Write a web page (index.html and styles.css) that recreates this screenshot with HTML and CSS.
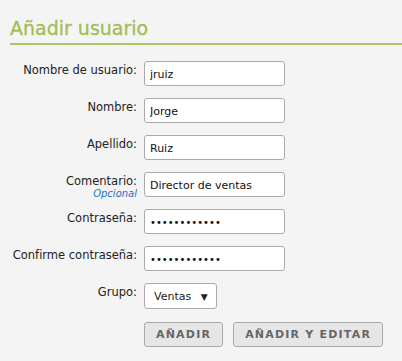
FILE: index.html
```html
<!DOCTYPE html>
<html lang="es">
<head>
    <meta charset="utf-8">
    <title>Añadir usuario</title>
    <link rel="stylesheet" href="styles.css">
</head>
<body>
    <h1 class="title">Añadir usuario</h1>

    <form class="user-form">
        <label class="label" for="username">Nombre de usuario:</label>
        <div class="field"><input class="text" id="username" type="text" value="jruiz"></div>

        <label class="label" for="name">Nombre:</label>
        <div class="field"><input class="text" id="name" type="text" value="Jorge"></div>

        <label class="label" for="surname">Apellido:</label>
        <div class="field"><input class="text" id="surname" type="text" value="Ruiz"></div>

        <label class="label" for="comment">Comentario:<span class="optional">Opcional</span></label>
        <div class="field"><input class="text" id="comment" type="text" value="Director de ventas"></div>

        <label class="label" for="pass">Contraseña:</label>
        <div class="field"><input class="text pass" id="pass" type="password" value="123456789012"></div>

        <label class="label" for="pass2">Confirme contraseña:</label>
        <div class="field"><input class="text pass" id="pass2" type="password" value="123456789012"></div>

        <label class="label" for="group">Grupo:</label>
        <div class="field">
            <div class="select" id="group">Ventas <span class="arrow">&#9660;</span></div>
        </div>

        <div></div>
        <div class="actions">
            <button type="button" class="btn">AÑADIR</button>
            <button type="button" class="btn">AÑADIR Y EDITAR</button>
        </div>
    </form>
</body>
</html>
```

FILE: styles.css
```css
body {
    margin: 0;
    background: #f4f4f4;
    font-family: "DejaVu Sans", Verdana, sans-serif;
    font-size: 11px;
    color: #222;
}

.title {
    margin: 0 0 0 10px;
    padding: 16px 0 3px;
    font-size: 19px;
    font-weight: normal;
    line-height: 24px;
    color: #a3bd55;
    border-bottom: 2px solid #a8c464;
    -webkit-text-stroke: 0.3px #a3bd55;
}

.user-form {
    display: grid;
    grid-template-columns: 137px 1fr;
    column-gap: 7px;
    row-gap: 12px;
    padding-top: 16px;
}

.label {
    height: 25px;
    text-align: right;
    padding-top: 3px;
    box-sizing: border-box;
    font-size: 11.5px;
    line-height: 13px;
}

.optional {
    display: block;
    font-size: 10px;
    line-height: 11px;
    font-style: italic;
    color: #1b75c2;
}

.text {
    box-sizing: border-box;
    width: 141px;
    height: 25px;
    margin: 0;
    padding: 2px 5px 0;
    border: 1px solid #aaa;
    border-radius: 3px;
    background: #fff;
    font-family: inherit;
    font-size: 11px;
    color: #111;
}

.pass {
    font-size: 10px;
}

.select {
    box-sizing: border-box;
    width: 73px;
    height: 26px;
    padding: 6px 0 0 9px;
    border: 1px solid #aaa;
    border-radius: 3px;
    background: #fff;
    font-size: 11px;
}

.arrow {
    font-size: 9px;
    margin-left: 6px;
}

.actions {
    display: flex;
    gap: 10px;
    padding-top: 1px;
}

.btn {
    height: 25px;
    padding: 0 11px;
    border: 1px solid #a9a9a9;
    border-radius: 3px;
    background: #e6e6e6;
    font-family: inherit;
    font-size: 11px;
    font-weight: bold;
    letter-spacing: 1.2px;
    color: #666;
    cursor: pointer;
}
```
